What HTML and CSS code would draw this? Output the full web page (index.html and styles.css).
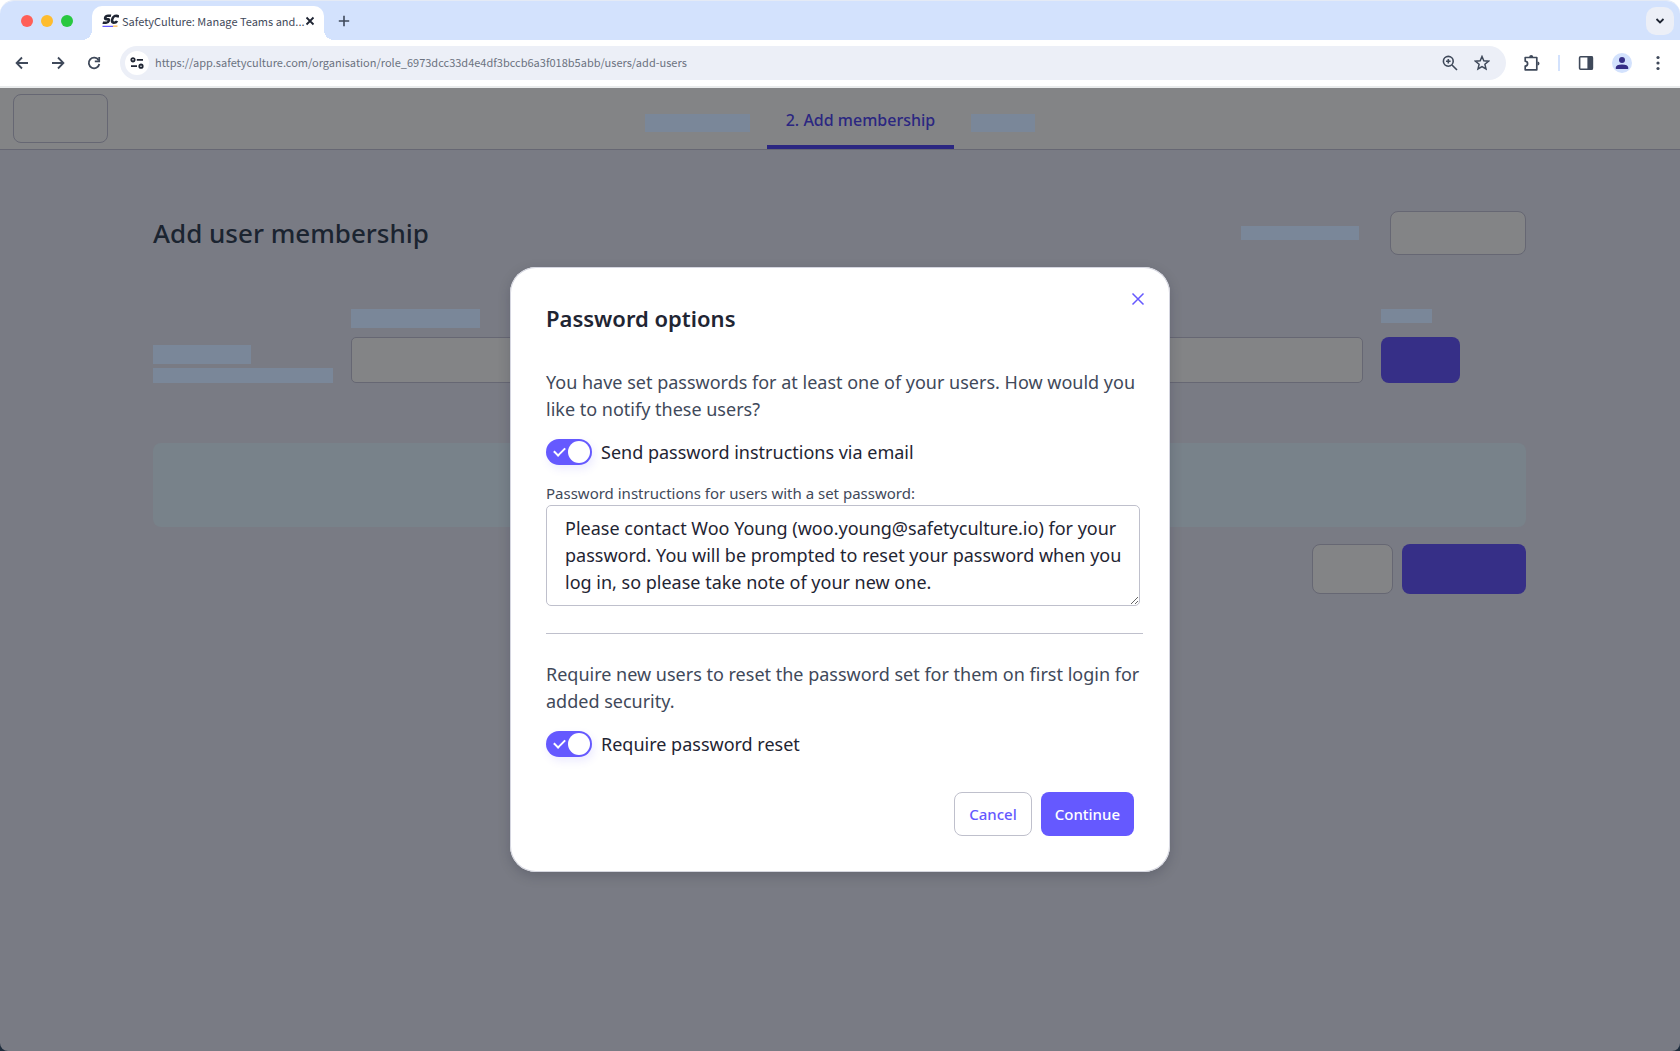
FILE: index.html
```html
<!DOCTYPE html>
<html lang="en">
<head>
    <meta charset="UTF-8">
    <meta name="viewport" content="width=device-width, initial-scale=1.0">
    <title>SafetyCulture: Manage Teams and Users</title>
    <link rel="stylesheet" href="styles.css">
</head>
<body>
<div class="window">
    <!-- Browser tabs -->
    <div class="tab-strip">
        <div class="lights">
            <span class="light red"></span>
            <span class="light yellow"></span>
            <span class="light green"></span>
        </div>
        <div class="browser-tab">
            <svg class="favicon" width="17" height="14" viewBox="0 0 17 14">
                <g transform="translate(2 0) skewX(-12)" fill="none" stroke="#1f2533" stroke-width="2.6">
                    <path d="M7.4 1.8H4.2Q2.2 1.8 2 3.5T4 5.3H5Q6.4 5.4 6.2 7T4.2 8.7H.6"/>
                    <path d="M15 3.6Q15 1.8 12.6 1.8 9.6 1.8 9.4 5.2T11.8 8.7Q14 8.7 14.6 7"/>
                </g>
                <path d="M.5 12.4H11" stroke="#6559ff" stroke-width="1.3"/>
                <path d="M11 12.2H15.5" stroke="#ffb64d" stroke-width="1.3"/>
            </svg>
            <span class="tab-title">SafetyCulture: Manage Teams and...</span>
            <button class="chrome-btn tab-close" aria-label="Close tab">
                <svg width="10" height="10" viewBox="0 0 10 10"><path d="M1.5 1.5l7 7M8.5 1.5l-7 7" stroke="#1f2533" stroke-width="1.8"/></svg>
            </button>
        </div>
        <button class="chrome-btn new-tab" aria-label="New tab">
            <svg width="12" height="12" viewBox="0 0 12 12"><path d="M6 .8v10.4M.8 6h10.4" stroke="#3f495a" stroke-width="1.6"/></svg>
        </button>
        <button class="chrome-btn tab-search" aria-label="Search tabs">
            <svg width="10" height="8" viewBox="0 0 10 8"><path d="M1.5 2L5 5.5 8.5 2" fill="none" stroke="#1f2533" stroke-width="1.8"/></svg>
        </button>
    </div>

    <!-- Browser toolbar -->
    <div class="toolbar">
        <div class="nav-btns">
            <button class="chrome-btn" aria-label="Back">
                <svg width="14" height="14" viewBox="0 0 14 14"><path d="M13 7H2M7 1.5L1.6 7 7 12.5" fill="none" stroke="#3f495a" stroke-width="1.8"/></svg>
            </button>
            <button class="chrome-btn" aria-label="Forward">
                <svg width="14" height="14" viewBox="0 0 14 14"><path d="M1 7h11M7 1.5L12.4 7 7 12.5" fill="none" stroke="#3f495a" stroke-width="1.8"/></svg>
            </button>
            <button class="chrome-btn" aria-label="Reload">
                <svg width="14" height="14" viewBox="0 0 14 14"><path d="M11.6 4.2A5.3 5.3 0 1 0 12.3 8" fill="none" stroke="#3f495a" stroke-width="1.8"/><path d="M12.2 1v4.4H7.8" fill="none" stroke="#3f495a" stroke-width="1.8"/></svg>
            </button>
        </div>
        <div class="address-bar">
            <button class="chrome-btn site-info" aria-label="Site information">
                <svg width="14" height="12" viewBox="0 0 14 12" fill="none" stroke="#1f2533" stroke-width="1.8">
                    <circle cx="3" cy="2.8" r="1.7"/><path d="M6.8 2.8H13M1 9.2h6"/><circle cx="11" cy="9.2" r="1.7"/>
                </svg>
            </button>
            <input class="url" type="text" aria-label="Address" value="https://app.safetyculture.com/organisation/role_6973dcc33d4e4df3bccb6a3f018b5abb/users/add-users">
            <button class="chrome-btn" aria-label="Zoom">
                <svg width="16" height="16" viewBox="0 0 16 16" fill="none" stroke="#3f495a" stroke-width="1.6"><circle cx="6.3" cy="6.3" r="4.9"/><path d="M10 10l5 5M6.3 4v4.6M4 6.3h4.6"/></svg>
            </button>
            <button class="chrome-btn" aria-label="Bookmark">
                <svg width="16" height="16" viewBox="0 0 16 16"><path d="M8 1.5l1.8 4.3 4.7.4-3.6 3.1 1.1 4.6L8 11.5 4 13.9l1.1-4.6L1.5 6.2l4.7-.4z" fill="none" stroke="#3f495a" stroke-width="1.5"/></svg>
            </button>
        </div>
        <div class="tools">
            <button class="chrome-btn" aria-label="Extensions">
                <svg width="18" height="18" viewBox="0 0 18 18"><path d="M2.2 3.5h11.6v12.3H2.2v-3.6Q4.6 11.8 4.6 9.7T2.2 7.2z" fill="none" stroke="#3f495a" stroke-width="1.7" stroke-linejoin="round"/><path d="M6.2 3a2 2 0 0 1 4 0zM14.5 7.6a2 2 0 0 1 0 4z" fill="#3f495a"/></svg>
            </button>
            <span class="divider"></span>
            <button class="chrome-btn" aria-label="Side panel">
                <svg width="16" height="16" viewBox="0 0 16 16"><rect x="1.6" y="1.8" width="12.8" height="12.4" rx="1" fill="none" stroke="#3f495a" stroke-width="1.6"/><path d="M9.4 1.5h5.4v13H9.4z" fill="#3f495a"/></svg>
            </button>
            <button class="chrome-btn" aria-label="Profile">
                <svg width="20" height="20" viewBox="0 0 20 20"><circle cx="10" cy="10" r="10" fill="#d3e2fd"/><circle cx="10" cy="7" r="3" fill="#362f87"/><path d="M3.8 16v-1.6Q4 11.4 10 11.4t6.2 3V16z" fill="#362f87"/></svg>
            </button>
            <button class="chrome-btn" aria-label="Menu">
                <svg width="4" height="16" viewBox="0 0 4 16" fill="#3f495a"><circle cx="2" cy="2.5" r="1.6"/><circle cx="2" cy="8" r="1.6"/><circle cx="2" cy="13.5" r="1.6"/></svg>
            </button>
        </div>
    </div>

    <!-- Page -->
    <div class="page">
        <header class="steps">
            <button class="btn-blank back-btn" aria-label="Back"></button>
            <nav class="step-list">
                <span class="bar step-bar"></span>
                <a class="step-active" href="#">2. Add membership</a>
                <span class="bar step-bar-short"></span>
            </nav>
        </header>
        <main class="content">
            <div class="heading-row">
                <h1>Add user membership</h1>
                <span class="bar heading-bar"></span>
                <button class="btn-blank heading-btn" aria-label="Help"></button>
            </div>
            <div class="field-row">
                <div class="field-name">
                    <span class="bar name-bar"></span>
                    <span class="bar desc-bar"></span>
                </div>
                <div class="field-main">
                    <label class="bar label-bar" for="group"></label>
                    <input class="field-input" id="group" type="text">
                </div>
                <div class="field-action">
                    <span class="bar action-bar"></span>
                    <button class="btn-dark" aria-label="Apply"></button>
                </div>
            </div>
            <div class="banner"></div>
            <div class="page-actions">
                <button class="btn-blank prev-btn" aria-label="Previous"></button>
                <button class="btn-dark next-btn" aria-label="Next"></button>
            </div>
        </main>

        <div class="overlay">
            <form class="modal" role="dialog" aria-labelledby="modal-title">
                <button class="modal-close" type="button" aria-label="Close">
                    <svg width="14" height="14" viewBox="0 0 14 14"><path d="M1.5 1.5l11 11M12.5 1.5l-11 11" stroke="#6559ff" stroke-width="1.5"/></svg>
                </button>
                <h2 id="modal-title">Password options</h2>
                <p class="modal-text">You have set passwords for at least one of your users. How would you like to notify these users?</p>
                <label class="toggle-row">
                    <input class="toggle" type="checkbox" checked>
                    <span>Send password instructions via email</span>
                </label>
                <label class="area-label" for="instructions">Password instructions for users with a set password:</label>
                <textarea class="area" id="instructions" rows="3">Please contact Woo Young (woo.young@safetyculture.io) for your password. You will be prompted to reset your password when you log in, so please take note of your new one.</textarea>
                <hr>
                <p class="modal-text">Require new users to reset the password set for them on first login for added security.</p>
                <label class="toggle-row">
                    <input class="toggle" type="checkbox" checked>
                    <span>Require password reset</span>
                </label>
                <div class="modal-actions">
                    <button class="btn btn-cancel" type="button">Cancel</button>
                    <button class="btn btn-continue" type="submit">Continue</button>
                </div>
            </form>
        </div>
    </div>
</div>
</body>
</html>
```
FILE: styles.css
```css
* {
  margin: 0;
  padding: 0;
  box-sizing: border-box;
}

body {
  font-family: "Noto Sans", sans-serif;
  background: linear-gradient(#ffffff 50%, #1f2d3d 50%);
}

button, input, textarea {
  font-family: inherit;
  border: none;
  background: none;
}

svg {
  display: block;
}

.window {
  display: flex;
  flex-direction: column;
  min-height: 100vh;
  border-top: 1px solid #e4eaf5;
  border-radius: 14px 14px 8px 8px;
  overflow: hidden;
}

/* Tabs */
.tab-strip {
  display: flex;
  align-items: center;
  height: 39px;
  padding: 0 6px 0 21px;
  background-color: #d3e2fd;
}

.lights {
  display: flex;
  gap: 8px;
}

.light {
  width: 12px;
  height: 12px;
  border-radius: 50%;
}

.red { background-color: #ff5f57; }
.yellow { background-color: #febc2e; }
.green { background-color: #28c840; }

.chrome-btn {
  display: flex;
  align-items: center;
  justify-content: center;
  flex-shrink: 0;
}

.browser-tab {
  position: relative;
  display: flex;
  align-items: center;
  align-self: flex-end;
  width: 232px;
  height: 34px;
  margin-left: 19px;
  padding: 0 11px 4px 10px;
  background-color: #ffffff;
  border-radius: 10px 10px 0 0;
}

.browser-tab::before,
.browser-tab::after {
  content: "";
  position: absolute;
  bottom: 0;
  width: 10px;
  height: 10px;
}

.browser-tab::before {
  right: 100%;
  background: radial-gradient(circle at 0 0, transparent 10px, #ffffff 10px);
}

.browser-tab::after {
  left: 100%;
  background: radial-gradient(circle at 100% 0, transparent 10px, #ffffff 10px);
}

.favicon {
  flex-shrink: 0;
}

.tab-title {
  flex: 1;
  margin-left: 3px;
  font-family: "Noto Sans CJK SC", sans-serif;
  font-size: 11px;
  line-height: 16px;
  color: #3f495a;
  white-space: nowrap;
}

.new-tab {
  width: 20px;
  margin-left: 10px;
}

.tab-search {
  width: 28px;
  height: 28px;
  margin-left: auto;
  background-color: #eceff7;
  border-radius: 10px;
}

/* Toolbar */
.toolbar {
  display: flex;
  align-items: center;
  height: 48px;
  padding: 0 20px 0 15px;
  background-color: #ffffff;
  border-bottom: 2px solid #e9ebec;
}

.nav-btns {
  display: flex;
  gap: 22px;
}

.address-bar {
  display: flex;
  flex: 1;
  align-items: center;
  height: 34px;
  margin: 0 17px 0 19px;
  padding: 0 16px 0 5px;
  background-color: #eceff7;
  border-radius: 17px;
}

.address-bar .chrome-btn + .chrome-btn {
  margin-left: 16px;
}

.site-info {
  width: 24px;
  height: 24px;
  background-color: #ffffff;
  border-radius: 50%;
}

.url {
  flex: 1;
  margin-left: 6px;
  padding-bottom: 2px;
  font-family: "Noto Sans CJK SC", sans-serif;
  font-size: 11px;
  color: #6b7280;
}

.tools {
  display: flex;
  align-items: center;
}

.divider {
  width: 2px;
  height: 16px;
  margin: 0 18px 0 17px;
  background-color: #d3e2fd;
}

.tools .chrome-btn + .chrome-btn {
  margin-left: 18px;
}

.tools .chrome-btn:last-child {
  margin-left: 24px;
}

/* Page behind the dialog */
.page {
  position: relative;
  flex: 1;
  background-color: #797b84;
}

.bar {
  display: block;
  background-color: #7a8799;
}

.btn-blank {
  background-color: #838486;
  border: 1px solid #666773;
  border-radius: 8px;
}

.btn-dark {
  background-color: #362f87;
  border-radius: 8px;
}

.steps {
  display: grid;
  grid-template-columns: 1fr auto 1fr;
  align-items: center;
  height: 62px;
  padding: 0 13px;
  background-color: #838486;
  border-bottom: 1px solid #666773;
}

.back-btn {
  width: 95px;
  height: 49px;
}

.step-list {
  display: flex;
  align-items: center;
  align-self: stretch;
  padding-top: 8px;
}

.step-bar {
  width: 105px;
  height: 18px;
  margin-right: 17px;
}

.step-bar-short {
  width: 64px;
  height: 18px;
  margin-left: 17px;
}

.step-active {
  width: 187px;
  border-bottom: 4px solid #2b2781;
  font-size: 16px;
  font-weight: 500;
  line-height: 49px;
  text-align: center;
  text-decoration: none;
  color: #2b2781;
}

.content {
  padding: 61px 154px 61px 153px;
}

.heading-row {
  display: flex;
  align-items: center;
}

h1 {
  margin-right: auto;
  font-size: 26px;
  font-weight: 500;
  line-height: 44px;
  color: #1b2430;
}

.heading-bar {
  width: 118px;
  height: 14px;
}

.heading-btn {
  width: 136px;
  height: 44px;
  margin-left: 31px;
}

.field-row {
  display: flex;
  gap: 18px;
  align-items: flex-end;
  margin-top: 54px;
}

.field-name {
  display: flex;
  flex-direction: column;
  gap: 4px;
}

.name-bar {
  width: 98px;
  height: 19px;
}

.desc-bar {
  width: 180px;
  height: 15px;
}

.field-main {
  flex: 1;
}

.label-bar {
  width: 129px;
  height: 19px;
  margin-bottom: 9px;
}

.field-input {
  display: block;
  width: 100%;
  height: 46px;
  background-color: #838486;
  border: 1px solid #666773;
  border-radius: 5px;
}

.field-action {
  width: 145px;
}

.action-bar {
  width: 51px;
  height: 14px;
  margin-bottom: 14px;
}

.field-action .btn-dark {
  display: block;
  width: 79px;
  height: 46px;
}

.banner {
  height: 84px;
  margin-top: 60px;
  background-color: #78828a;
  border-radius: 8px;
}

.page-actions {
  display: flex;
  justify-content: flex-end;
  gap: 9px;
  margin-top: 17px;
}

.prev-btn {
  width: 81px;
  height: 50px;
}

.next-btn {
  width: 124px;
  height: 50px;
}

/* Dialog */
.overlay {
  position: absolute;
  inset: 0;
  display: flex;
  align-items: center;
  justify-content: center;
}

.modal {
  position: relative;
  display: flex;
  flex-direction: column;
  width: 660px;
  max-width: 100%;
  padding: 36px 27px 36px 36px;
  background-color: #ffffff;
  border-radius: 26px;
  box-shadow: 0 4px 12px rgba(40, 44, 60, 0.25), inset 0 0 0 1px #d5d6e0;
}

.modal-close {
  position: absolute;
  top: 25px;
  right: 25px;
  cursor: pointer;
}

h2 {
  margin-bottom: 36px;
  font-size: 22px;
  font-weight: 600;
  line-height: 30px;
  color: #1f2533;
}

.modal-text {
  margin-bottom: 16px;
  font-size: 18px;
  line-height: 27px;
  color: #3f495a;
}

.toggle-row {
  display: flex;
  align-items: center;
  gap: 9px;
  font-size: 18px;
  line-height: 26px;
  color: #1f2533;
}

.toggle {
  position: relative;
  appearance: none;
  width: 46px;
  height: 26px;
  background-color: #6559ff;
  border-radius: 13px;
  box-shadow: 2px 4px 8px rgba(101, 89, 255, 0.12);
}

/* tick */
.toggle::before {
  content: "";
  position: absolute;
  top: 8px;
  left: 8px;
  width: 9px;
  height: 5px;
  border: solid #ffffff;
  border-width: 0 0 2px 2px;
  transform: rotate(-45deg);
}

/* knob */
.toggle::after {
  content: "";
  position: absolute;
  top: 2px;
  right: 2px;
  width: 22px;
  height: 22px;
  background-color: #ffffff;
  border-radius: 50%;
}

.area-label {
  margin-top: 16px;
  font-size: 15px;
  line-height: 24px;
  color: #3f495a;
}

.area {
  margin-right: 3px;
  padding: 9px 9px 9px 18px;
  border: 1px solid #bfc0cc;
  border-radius: 5px;
  font-size: 18px;
  line-height: 27px;
  color: #1f2533;
  resize: vertical;
  overflow: auto;
}

hr {
  margin: 27px 0;
  border: none;
  border-top: 1px solid #bfc0cc;
}

.modal-actions {
  display: flex;
  justify-content: flex-end;
  gap: 9px;
  margin-top: 35px;
  padding-right: 9px;
}

.btn {
  height: 44px;
  padding: 0 14px;
  border-radius: 8px;
  font-size: 15px;
  font-weight: 500;
  cursor: pointer;
}

.btn-cancel {
  border: 1px solid #bfc0cc;
  color: #6559ff;
}

.btn-continue {
  background-color: #6559ff;
  color: #ffffff;
}
```
